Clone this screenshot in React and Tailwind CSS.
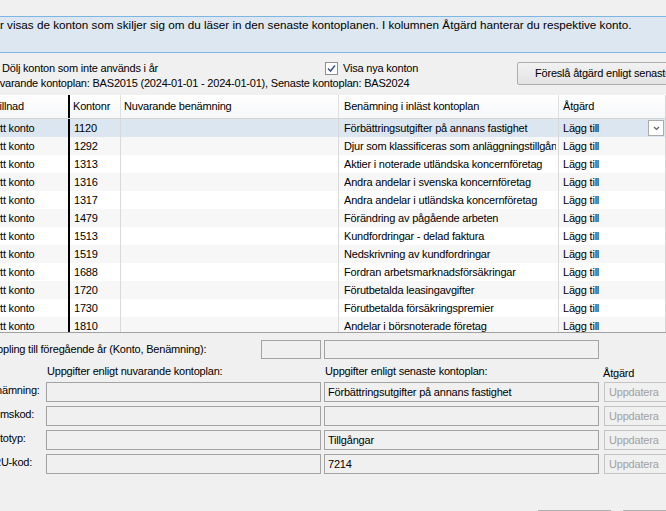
import React from 'react';

const rows = [
  ['1120', 'Förbättringsutgifter på annans fastighet'],
  ['1292', 'Djur som klassificeras som anläggningstillgångar'],
  ['1313', 'Aktier i noterade utländska koncernföretag'],
  ['1316', 'Andra andelar i svenska koncernföretag'],
  ['1317', 'Andra andelar i utländska koncernföretag'],
  ['1479', 'Förändring av pågående arbeten'],
  ['1513', 'Kundfordringar - delad faktura'],
  ['1519', 'Nedskrivning av kundfordringar'],
  ['1688', 'Fordran arbetsmarknadsförsäkringar'],
  ['1720', 'Förutbetalda leasingavgifter'],
  ['1730', 'Förutbetalda försäkringspremier'],
  ['1810', 'Andelar i börsnoterade företag'],
];

const details = [
  { label: 'Benämning:', shift: '-ml-[17px]', value: 'Förbättringsutgifter på annans fastighet' },
  { label: 'Momskod:', shift: '-ml-[15px]', value: '' },
  { label: 'Kontotyp:', shift: '-ml-[19px]', value: 'Tillgångar' },
  { label: 'SRU-kod:', shift: '-ml-[14px]', value: '7214' },
];

const Check = () => (
  <div className="w-[13px] h-[13px] border border-[#8e8f8f] bg-white flex items-center justify-center shrink-0">
    <svg width="9" height="9" viewBox="0 0 9 9">
      <path d="M1 4.5 L3.5 7 L8 1.5" fill="none" stroke="#3d5a87" strokeWidth="1.6" />
    </svg>
  </div>
);

const TextBox = ({ className = '', children }) => (
  <div className={`h-[20px] shrink-0 border border-[#a3a3a3] bg-[#f0f0f0] px-[3px] flex items-center whitespace-nowrap overflow-hidden ${className}`}>
    {children}
  </div>
);

export default function App() {
  return (
    <div
      className="w-[666px] h-[511px] overflow-hidden bg-[#f0f0f0] text-[11px] tracking-[-0.2px] text-black"
      style={{ fontFamily: '"Liberation Sans", Arial, sans-serif' }}
    >
      {/* Info banner */}
      <div className="mt-[16px] h-[37px] border-y border-[#7eb6e2] bg-[#dce7f1] flex items-start whitespace-nowrap">
        <span className="-ml-[15px] leading-[16px] text-[11.7px] tracking-normal">Här visas de konton som skiljer sig om du läser in den senaste kontoplanen. I kolumnen Åtgärd hanterar du respektive konto.</span>
      </div>

      {/* Options */}
      <div className="mt-[8px] flex items-start whitespace-nowrap">
        <div className="w-[517px] shrink-0 flex flex-col">
          <div className="h-[15px] flex items-center">
            <span className="ml-[2px] w-[323px] shrink-0">Dölj konton som inte används i år</span>
            <Check />
            <span className="ml-[5px]">Visa nya konton</span>
          </div>
          <div className="h-[15px] flex items-center">
            <span className="-ml-[14px]">Nuvarande kontoplan: BAS2015 (2024-01-01 - 2024-01-01), Senaste kontoplan: BAS2024</span>
          </div>
        </div>
        <div className="mt-[1px] h-[23px] w-[170px] shrink-0 border border-[#adadad] rounded-[2px] bg-gradient-to-b from-[#f2f2f2] to-[#e3e3e3] flex items-center pl-[17px]">
          Föreslå åtgärd enligt senaste kontoplan
        </div>
      </div>

      {/* Grid */}
      <div className="mt-[4px] h-[238px] overflow-hidden border-b border-[#a0a0a0] bg-white whitespace-nowrap">
        <div className="h-[24px] flex border-b border-[#d5d5d5] bg-gradient-to-b from-[#ffffff] to-[#f6f7f9]">
          <div className="w-[70px] shrink-0 border-r-2 border-black flex items-center overflow-hidden">
            <span className="-ml-[13px]">Skillnad</span>
          </div>
          <div className="w-[51px] shrink-0 border-r border-[#e0e0e0] flex items-center pl-[3px]">Kontonr</div>
          <div className="w-[218px] shrink-0 border-r border-[#e0e0e0] flex items-center pl-[3px]">Nuvarande benämning</div>
          <div className="w-[220px] shrink-0 border-r border-[#e0e0e0] flex items-center pl-[5px]">Benämning i inläst kontoplan</div>
          <div className="w-[107px] shrink-0 border-r border-[#d5d5d5] flex items-center pl-[4px]">Åtgärd</div>
        </div>
        {rows.map(([nr, name], i) => {
          const bg = i === 0 ? 'bg-[#dce6f0]' : i % 2 === 1 ? 'bg-[#f7f7f7]' : 'bg-white';
          return (
            <div key={nr} className={`h-[18px] flex ${bg}`}>
              <div className="w-[70px] shrink-0 border-r-2 border-black flex items-center overflow-hidden">
                <span className="-ml-[13px]">Nytt konto</span>
              </div>
              <div className="w-[51px] shrink-0 border-r border-[#d9d9d9] flex items-center pl-[4px]">{nr}</div>
              <div className="w-[218px] shrink-0 border-r border-[#d9d9d9]" />
              <div className="w-[220px] shrink-0 border-r border-[#d9d9d9] flex items-center pl-[5px] overflow-hidden">
                <span className="block w-[212px] overflow-hidden">{name}</span>
              </div>
              <div className="w-[107px] shrink-0 border-r border-[#d5d5d5] flex items-center pl-[4px] justify-between">
                <span>Lägg till</span>
                {i === 0 && (
                  <div className="mr-[1px] w-[16px] h-[16px] border border-[#acacac] bg-white flex items-center justify-center">
                    <svg width="7" height="5" viewBox="0 0 7 5">
                      <path d="M1 1 L3.5 3.5 L6 1" fill="none" stroke="#606060" strokeWidth="1.2" />
                    </svg>
                  </div>
                )}
              </div>
            </div>
          );
        })}
      </div>

      {/* Previous year link */}
      <div className="mt-[7px] h-[19px] flex items-center whitespace-nowrap">
        <div className="w-[261px] shrink-0 overflow-hidden">
          <span className="-ml-[16px] inline-block">Koppling till föregående år (Konto, Benämning):</span>
        </div>
        <div className="w-[60px] shrink-0 h-[19px] border border-[#a3a3a3]" />
        <div className="ml-[3px] w-[275px] shrink-0 h-[19px] border border-[#a3a3a3]" />
      </div>

      {/* Detail headers */}
      <div className="mt-[5px] h-[14px] flex items-center whitespace-nowrap">
        <span className="ml-[47px] w-[278px] shrink-0">Uppgifter enligt nuvarande kontoplan:</span>
        <span className="w-[278px] shrink-0">Uppgifter enligt senaste kontoplan:</span>
        <span className="mt-[4px]">Åtgärd</span>
      </div>

      {/* Details */}
      <div className="mt-[4px] flex flex-col gap-[4px]">
        {details.map((d) => (
          <div key={d.label} className="flex items-start whitespace-nowrap">
            <div className="w-[46px] shrink-0 h-[20px] overflow-hidden flex items-center -mt-[2px]">
              <span className={`${d.shift} inline-block`}>{d.label}</span>
            </div>
            <TextBox className="w-[275px]" />
            <TextBox className="ml-[3px] w-[275px]">{d.value}</TextBox>
            <div className="ml-[5px] h-[20px] w-[70px] shrink-0 border border-[#c4c4c4] bg-[#f0f0f0] flex items-center pl-[4px] text-[#a0a0a0]">
              Uppdatera
            </div>
          </div>
        ))}
      </div>

      {/* Bottom buttons */}
      <div className="mt-[36px] flex">
        <div className="ml-[538px] w-[73px] h-[23px] border border-[#adadad] bg-[#e6e6e6] shrink-0" />
        <div className="ml-[12px] w-[73px] h-[23px] border border-[#adadad] bg-[#e6e6e6] shrink-0" />
      </div>
    </div>
  );
}
